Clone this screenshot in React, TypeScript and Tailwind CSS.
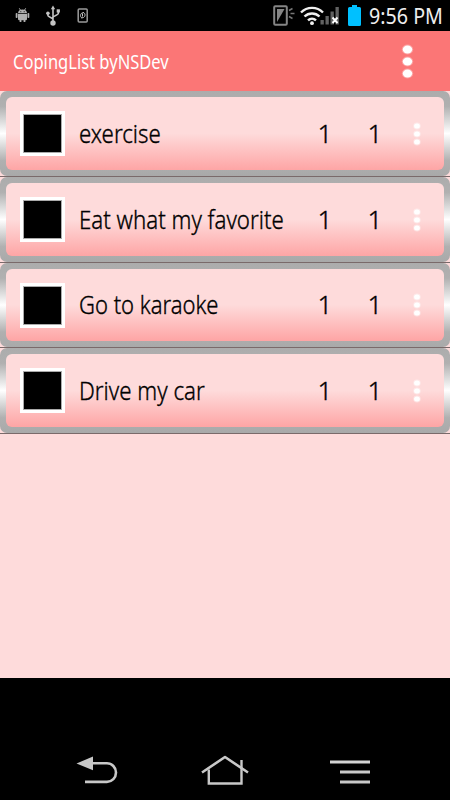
import React from "react"
import clsx from "clsx"

type Coping = {
  name: string
  count: number
  score: number
  height: string
  scale: string
}

const items: Coping[] = [
  { name: "exercise", count: 1, score: 1, height: "h-[85px]", scale: "scale-x-[0.89]" },
  { name: "Eat what my favorite", count: 1, score: 1, height: "h-[85px]", scale: "scale-x-[0.89]" },
  { name: "Go to karaoke", count: 1, score: 1, height: "h-[84px]", scale: "scale-x-[0.88]" },
  { name: "Drive my car", count: 1, score: 1, height: "h-[85px]", scale: "scale-x-[0.89]" },
]

const StatusBar = () => (
  <div className="flex h-[31px] shrink-0 items-center bg-black">
    <svg width="270" height="31" viewBox="0 0 270 31" className="shrink-0">
      {/* android */}
      <g fill="#b0b0b0">
        <path d="M18 13c.2-2.400 2-3.500 4.500-3.500s4.300 1.100 4.500 3.500z" />
        <path d="M18 13.700h9v5.300q0 1.200-1.200 1.200h-.4V22h-1.800v-1.800h-2.200V22h-1.800v-1.800h-.4q-1.200 0-1.200-1.200z" />
        <rect x="15.700" y="13" width="1.800" height="5" rx=".8" />
        <rect x="27.500" y="13" width="1.800" height="5" rx=".8" />
        <path d="M19.300 8.300l1.300 2M25.700 8.300l-1.300 2" stroke="#b0b0b0" />
      </g>
      <circle cx="20.800" cy="11.700" r=".6" fill="#333" />
      <circle cx="24.200" cy="11.700" r=".6" fill="#333" />
      {/* usb */}
      <g stroke="#c4c4c4" strokeWidth="1.600" fill="none">
        <path d="M53 22V8M47.900 13.500v2c0 1.500 5.100 2 5.100 4M58.300 11v2.500c0 1.700-5.300 2.200-5.300 4" />
      </g>
      <g fill="#c4c4c4">
        <path d="M53 5.500l2.200 3.800h-4.400z" />
        <circle cx="53" cy="23" r="2.700" />
        <circle cx="47.900" cy="13.200" r="1.800" />
        <rect x="56.700" y="9.300" width="3.200" height="3.200" />
      </g>
      {/* device */}
      <rect x="78.200" y="9" width="9" height="13" rx="1" fill="none" stroke="#9a9a9a" strokeWidth="1.500" />
      <path d="M82 18c-2-1-2-4 0-5l2-.5M83.500 12.500c2 1 2 4 0 5l-2 .5M82.500 13.500v3" fill="none" stroke="#c4c4c4" />
    </svg>
    <svg width="95" height="31" viewBox="270 0 95 31" className="shrink-0">
      <rect x="274.200" y="6.200" width="12.600" height="18.600" rx="1" fill="none" stroke="#858585" strokeWidth="2" />
      <path d="M277 9h7.500L277 22z" fill="#858585" />
      <path d="M289 10.500l3.500-2M290.500 13.500h4M289 16.500l3.500 2" stroke="#777" strokeWidth="1.500" />
      <g fill="none" stroke="#f0f0f0" strokeWidth="2.400">
        <path d="M301 12.500a15.500 15.500 0 0 1 22 0" />
        <path d="M304.500 16.500a10.700 10.700 0 0 1 15 0" />
        <path d="M308 20.300a5.800 5.800 0 0 1 8 0" />
      </g>
      <circle cx="312" cy="23.200" r="1.900" fill="#f0f0f0" />
      <g fill="#626262">
        <rect x="320.500" y="20" width="3.300" height="4.500" />
        <rect x="325.500" y="16" width="3.300" height="8.500" />
        <rect x="330.500" y="11.500" width="3.300" height="13" />
        <rect x="335.500" y="7" width="3.300" height="17.500" />
      </g>
      <path d="M332.500 17.500l5 5.500M337.500 17.500l-5 5.500" stroke="#fff" strokeWidth="1.900" />
      <path d="M352 5h5v2h2.500q1.500 0 1.500 1.500v16q0 1.500-1.500 1.500h-10q-1.500 0-1.500-1.500v-16q0-1.500 1.500-1.500h2.500z" fill="#00c0ff" />
    </svg>
    <span className="ml-[4px] origin-left scale-x-[0.895] whitespace-nowrap text-[22px] leading-[31px] text-[#eee]">
      9:56 PM
    </span>
  </div>
)

const Header = () => (
  <header className="flex h-[60px] shrink-0 items-center bg-[#fb7676]">
    <h1 className="ml-[13px] w-[387px] shrink-0">
      <span className="inline-block origin-left scale-x-[0.87] whitespace-nowrap pt-px text-[19px] leading-[60px] text-white">
        CopingList byNSDev
      </span>
    </h1>
    <svg width="14" height="40" viewBox="0 0 14 40" fill="#fff">
      {[8.5, 20.5, 32.5].map((y) => (
        <g key={y}>
          <ellipse cx="7.500" cy={y} rx="5.700" ry="5" opacity=".3" />
          <ellipse cx="7.500" cy={y} rx="4.700" ry="4" />
        </g>
      ))}
    </svg>
  </header>
)

const Row = ({ item }: { item: Coping }) => (
  <li className="border-b border-[#7a6a6a]">
    <div
      className={clsx(
        "rounded-[7px] bg-[linear-gradient(#acacac_0%,#b0b0b0_18%,#fff_50%,#b0b0b0_82%,#a9a9a9_100%)] p-[6px]",
        item.height
      )}
    >
      <div className="flex h-full items-center rounded-[6px] bg-[linear-gradient(#fedbdb_0%,#fedbdb_50%,#fea5a5_100%)] pl-[14px] font-light text-black [-webkit-text-stroke:0.35px_black]">
        <div className="size-[45px] shrink-0 border-[3px] border-white bg-black outline-1 -outline-offset-4 outline-[#aaa]" />
        <div className="ml-[14px] w-[230px] shrink-0 pb-[2px]">
          <span
            className={clsx(
              "inline-block origin-left whitespace-nowrap text-[25px] leading-[34px]",
              item.scale
            )}
          >
            {item.name}
          </span>
        </div>
        <span className="w-[32px] shrink-0 pb-[2px] text-center text-[26px] leading-[34px]">
          {item.count}
        </span>
        <span className="ml-[18px] w-[32px] shrink-0 pb-[2px] text-center text-[26px] leading-[34px]">
          {item.score}
        </span>
        <svg width="10" height="26" viewBox="0 0 10 26" className="ml-[21px] shrink-0" fill="#fff">
          {[5, 13, 21].map((y) => (
            <g key={y}>
              <ellipse cx="5" cy={y} rx="3.700" ry="3.400" opacity=".4" />
              <ellipse cx="5" cy={y} rx="2.900" ry="2.500" />
            </g>
          ))}
        </svg>
      </div>
    </div>
  </li>
)

const NavBar = () => (
  <div className="h-[122px] shrink-0 bg-black pt-[72px]">
    <svg width="450" height="50" viewBox="0 750 450 50" fill="none" stroke="#c8c8c8">
      <path d="M92 763.300h15a9 9.300 0 0 1 0 18.600H85" strokeWidth="2.600" />
      <path d="M76.500 763.500L93 756.500v13.700z" fill="#c8c8c8" stroke="none" />
      <path d="M202 772.500L225 757l23 15.500" strokeWidth="2.600" strokeLinejoin="round" />
      <path d="M208.800 769.500v14h32.700V760" strokeWidth="2.400" />
      <path d="M330 762h40" strokeWidth="3" stroke="#d4d4d4" />
      <path d="M340 772h30M340 782h30" strokeWidth="3" />
    </svg>
  </div>
)

const App = () => {
  return (
    <div className="flex h-[800px] w-[450px] flex-col overflow-hidden bg-[#fedbdb] font-['Noto_Sans',sans-serif]">
      <StatusBar />
      <Header />
      <ul className="flex-1">
        {items.map((item) => (
          <Row key={item.name} item={item} />
        ))}
      </ul>
      <NavBar />
    </div>
  )
}

export default App
